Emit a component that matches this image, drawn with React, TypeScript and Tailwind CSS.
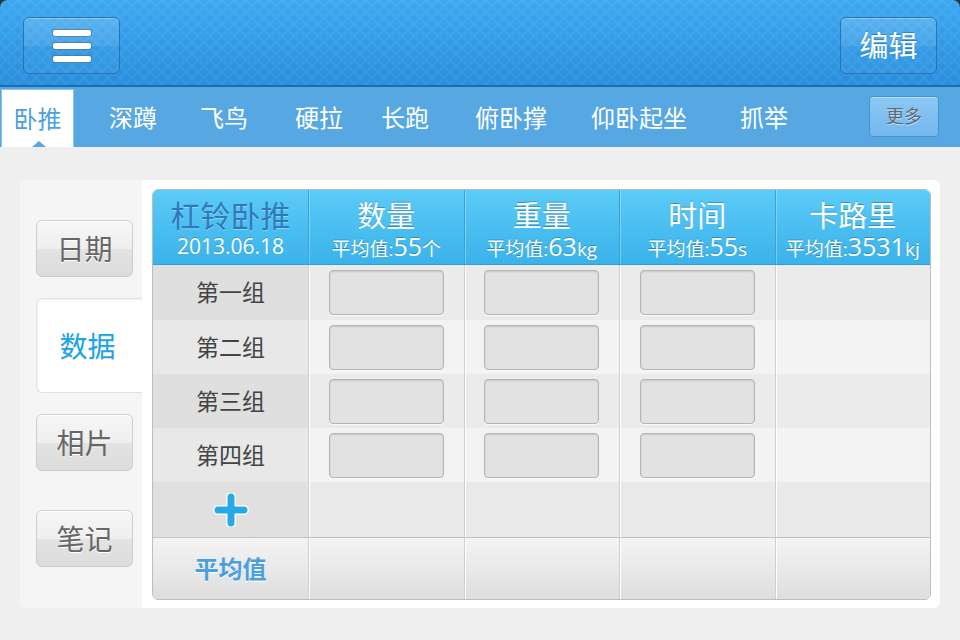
import React from 'react';

const tabs = [
  { label: '深蹲', cls: 'ml-[35px]' },
  { label: '飞鸟', cls: 'ml-[43px]' },
  { label: '硬拉', cls: 'ml-[47px]' },
  { label: '长跑', cls: 'ml-[38px]' },
  { label: '俯卧撑', cls: 'ml-[46px]' },
  { label: '仰卧起坐', cls: 'ml-[44px]' },
  { label: '抓举', cls: 'ml-[53px]' },
];

const columns = [
  { title: '数量', value: '55', unit: '个' },
  { title: '重量', value: '63', unit: 'kg' },
  { title: '时间', value: '55', unit: 's' },
  { title: '卡路里', value: '3531', unit: 'kj' },
];

const groups = ['第一组', '第二组', '第三组', '第四组'];

function SideButton({ label }: { label: string }) {
  return (
    <div className="w-[97px] h-[57px] ml-[16px] rounded-[6px] border border-[#cdcdcd] bg-[linear-gradient(#f6f6f6_0%,#efefef_50%,#e3e3e3_50%,#dcdcdc_100%)] shadow-[inset_0_1px_0_#fff] flex items-center justify-center text-[28px] text-[#666] [text-shadow:0_1px_0_#fff]">
      {label}
    </div>
  );
}

function InputBox() {
  return (
    <div className="w-[115px] h-[45px] rounded-[4px] border border-[#b4b4b4] bg-[#e2e2e2] shadow-[inset_0_1px_2px_rgba(0,0,0,0.12),0_1px_0_#fafafa]" />
  );
}

function TopButton({ children }: { children: React.ReactNode }) {
  return (
    <div className="w-[97px] h-[57px] rounded-[6px] border border-[#2a72b0] bg-[linear-gradient(rgba(255,255,255,0.16)_0%,rgba(255,255,255,0.1)_50%,rgba(255,255,255,0.02)_50%,rgba(255,255,255,0.04)_100%)] shadow-[inset_0_1px_0_rgba(255,255,255,0.3)] flex items-center justify-center">
      {children}
    </div>
  );
}

export default function App() {
  return (
    <div className="w-[960px] h-[640px] bg-[#efefef] font-['Open_Sans','Noto_Sans_CJK_SC',sans-serif] overflow-hidden">
      {/* top bar */}
      <div className="bg-[#24364d]">
        <div className="relative h-[87px] rounded-t-[8px] overflow-hidden bg-[linear-gradient(#3ea9f1,#2a8fdd)] border-b-2 border-[#1d6cb3] flex items-start justify-between px-[23px] pt-[17px]">
          <svg className="absolute inset-0 w-full h-full" aria-hidden>
            <defs>
              <pattern id="dia" width="12" height="12" patternUnits="userSpaceOnUse">
                <path d="M6 0 L12 6 L6 12 L0 6 Z" fill="none" stroke="rgba(255,255,255,0.06)" strokeWidth="1.5" />
                <path d="M6 3.5 L8.5 6 L6 8.5 L3.5 6 Z" fill="rgba(0,60,140,0.05)" />
              </pattern>
            </defs>
            <rect width="100%" height="100%" fill="url(#dia)" />
          </svg>
          <div className="relative">
            <TopButton>
              <div className="flex flex-col gap-[7px]">
                <div className="w-[38px] h-[6px] rounded-[2px] bg-white shadow-[0_0_0_1px_rgba(90,90,90,0.45)]" />
                <div className="w-[38px] h-[6px] rounded-[2px] bg-white shadow-[0_0_0_1px_rgba(90,90,90,0.45)]" />
                <div className="w-[38px] h-[6px] rounded-[2px] bg-white shadow-[0_0_0_1px_rgba(90,90,90,0.45)]" />
              </div>
            </TopButton>
          </div>
          <div className="relative">
            <TopButton>
              <span className="text-[29px] text-white [text-shadow:0_-1px_0_rgba(0,0,0,0.25)]">编辑</span>
            </TopButton>
          </div>
        </div>
      </div>

      {/* tabs */}
      <div className="h-[60px] bg-[#57a7e2] flex items-end">
        <div className="relative w-[73px] h-[58px] ml-[1px] bg-white border border-[#8ec3ec] border-b-0 flex items-center justify-center text-[24px] text-[#4c9fe0]">
          卧推
          <div className="absolute bottom-0 left-[30px] w-0 h-0 border-l-[7px] border-r-[7px] border-b-[6px] border-l-transparent border-r-transparent border-b-[#57a7e2]" />
        </div>
        {tabs.map((t) => (
          <div key={t.label} className={`${t.cls} h-[58px] flex items-center text-[24px] text-white`}>
            {t.label}
          </div>
        ))}
        <div className="ml-auto mr-[21px] mb-[10px] w-[70px] h-[41px] rounded-[4px] border border-[#4a92cf] bg-[linear-gradient(#8cc7f4,#73b8ee)] shadow-[inset_0_1px_0_rgba(255,255,255,0.4)] flex items-center justify-center text-[18px] text-[#5c6b7a] [text-shadow:0_1px_0_rgba(255,255,255,0.6)]">
          更多
        </div>
      </div>

      {/* card */}
      <div className="mt-[33px] mx-[20px] h-[428px] rounded-[6px] bg-white flex overflow-hidden">
        <div className="w-[122px] bg-[#f5f5f5] flex flex-col pt-[40px]">
          <SideButton label="日期" />
          <div className="mt-[21px] ml-[16px] w-[106px] h-[95px] rounded-l-[6px] bg-white border border-r-0 border-[#e2e2e2] shadow-[inset_1px_1px_2px_rgba(0,0,0,0.06)] flex items-center justify-center pr-[4px] text-[28px] text-[#18a6ea] [text-shadow:0_1px_0_rgba(0,0,0,0.15)]">
            数据
          </div>
          <div className="mt-[21px]">
            <SideButton label="相片" />
          </div>
          <div className="mt-[39px]">
            <SideButton label="笔记" />
          </div>
        </div>

        <div className="flex-1 pl-[10px] pr-[9px] pt-[9px] pb-[8px]">
          <div className="w-[779px] h-[411px] rounded-[6px] border border-[#bdbdbd] overflow-hidden flex flex-col">
            {/* header */}
            <div className="h-[75px] flex bg-[linear-gradient(#5ccbf7,#3ab2ea)] border-b border-[#2e9fd8]">
              <div className="w-[155px] flex flex-col items-center pt-[9px]">
                <div className="text-[30px] leading-[34px] text-[#2f79bb] [text-shadow:0_1px_0_rgba(255,255,255,0.35)]">杠铃卧推</div>
                <div className="text-[21px] leading-[26px] text-white [text-shadow:0_-1px_0_rgba(0,0,0,0.2)]">2013.06.18</div>
              </div>
              {columns.map((c) => (
                <div key={c.title} className="flex-1 border-l border-[#35a3dd] shadow-[inset_1px_0_0_rgba(255,255,255,0.3)] flex flex-col items-center pt-[9px] text-white [text-shadow:0_-1px_0_rgba(0,0,0,0.25)]">
                  <div className="text-[29px] leading-[34px]">{c.title}</div>
                  <div className="leading-[26px] whitespace-nowrap">
                    <span className="text-[19px]">平均值:</span>
                    <span className="text-[25px]">{c.value}</span>
                    <span className="text-[19px]">{c.unit}</span>
                  </div>
                </div>
              ))}
            </div>

            {/* group rows */}
            {groups.map((g, i) => (
              <div key={g} className={`${i === 0 ? 'h-[55px]' : 'h-[54px]'} flex ${i % 2 === 0 ? 'bg-[#ebebeb]' : 'bg-[#f3f3f3]'}`}>
                <div className={`w-[155px] flex items-center justify-center text-[23px] text-[#444] ${i % 2 === 0 ? 'bg-[#dfdfdf]' : 'bg-[#e8e8e8]'}`}>
                  {g}
                </div>
                {[0, 1, 2, 3].map((k) => (
                  <div key={k} className="flex-1 border-l border-[#cfcfcf] shadow-[inset_1px_0_0_#fff] flex items-center justify-center">
                    {k < 3 && <InputBox />}
                  </div>
                ))}
              </div>
            ))}

            {/* add row */}
            <div className="h-[55px] flex bg-[#e9e9e9]">
              <div className="w-[155px] bg-[#e0e0e0] flex items-center justify-center">
                <svg width="36" height="34" viewBox="0 0 36 34">
                  <path d="M18 4 V30 M5 17 H31" stroke="#fff" strokeWidth="10" strokeLinecap="round" />
                  <path d="M18 4 V30 M5 17 H31" stroke="#26a9e4" strokeWidth="7" strokeLinecap="round" />
                </svg>
              </div>
              {[0, 1, 2, 3].map((k) => (
                <div key={k} className="flex-1 border-l border-[#cfcfcf] shadow-[inset_1px_0_0_#fff]" />
              ))}
            </div>

            {/* average row */}
            <div className="flex-1 flex border-t border-[#c2c2c2] bg-[linear-gradient(#f4f4f4,#dedede)]">
              <div className="w-[155px] flex items-center justify-center text-[24px] font-bold text-[#4a9fdd] [text-shadow:0_1px_0_#fff]">
                平均值
              </div>
              {[0, 1, 2, 3].map((k) => (
                <div key={k} className="flex-1 border-l border-[#cfcfcf] shadow-[inset_1px_0_0_#fff]" />
              ))}
            </div>
          </div>
        </div>
      </div>
    </div>
  );
}
